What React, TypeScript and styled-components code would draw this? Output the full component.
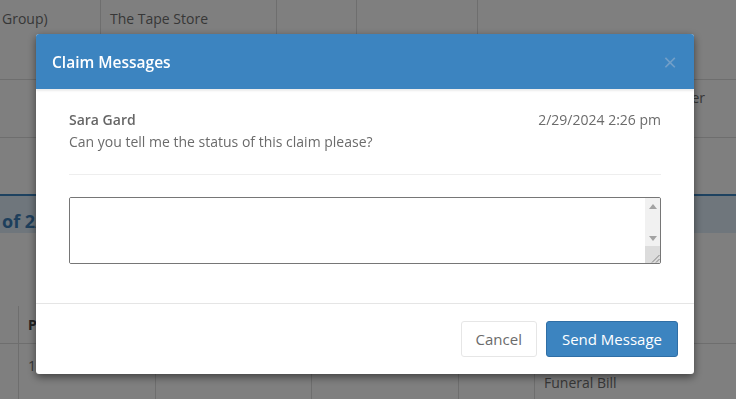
import React from "react"
import styled, { createGlobalStyle } from "styled-components"

const GlobalStyle = createGlobalStyle`
  html, body {
    margin: 0;
    padding: 0;
    background: #ffffff;
    font-family: "Open Sans", "Liberation Sans", sans-serif;
    overflow: hidden;
  }
`

const Page = styled.div`
  width: 736px;
  height: 399px;
  overflow: hidden;
  color: #6f6f6f;
  font-size: 14px;
`

const Grid = styled.div<{ $cols: string; $height: number }>`
  display: grid;
  grid-template-columns: ${p => p.$cols};
  height: ${p => p.$height}px;
  border-bottom: 1px solid #dddddd;
`

const Cell = styled.div<{ $bold?: boolean; $top?: number; $right?: number }>`
  border-left: 1px solid #dddddd;
  padding: ${p => p.$top ?? 9}px ${p => p.$right ?? 9}px 0 9px;
  line-height: 20px;
  font-weight: ${p => (p.$bold ? 700 : 400)};
  color: ${p => (p.$bold ? "#444" : "#6f6f6f")};
  text-align: ${p => (p.$right ? "right" : "left")};
  white-space: nowrap;

  &:first-child {
    border-left: none;
    padding-left: 2px;
  }
`

const Gap = styled.div<{ $height: number }>`
  height: ${p => p.$height}px;
`

const SectionBand = styled.div`
  height: 39px;
  box-sizing: border-box;
  border-top: 2px solid #3c84c0;
  background: #deecf8;
  color: #3d7fb8;
  font-weight: 700;
  font-size: 18px;
  line-height: 26px;
  padding: 12px 2px 0;
`

const Backdrop = styled.div`
  position: fixed;
  inset: 0;
  background: rgba(0, 0, 0, 0.5);
`

const Modal = styled.div`
  position: fixed;
  left: 36px;
  top: 34px;
  width: 658px;
  background: #ffffff;
  border-radius: 3px;
  box-shadow: 0 3px 9px rgba(0, 0, 0, 0.5);
  display: flex;
  flex-direction: column;
`

const Header = styled.div`
  height: 55px;
  background: #3c84c0;
  border-radius: 3px 3px 0 0;
  box-shadow: 0 2px 2px rgba(0, 0, 0, 0.08);
  display: flex;
  align-items: center;
  justify-content: space-between;
  padding: 0 16px;
  color: #ffffff;
  position: relative;
`

const Title = styled.div`
  font-size: 15.5px;
  font-weight: 600;
  line-height: 20px;
`

const Close = styled.div`
  font-size: 24px;
  font-weight: 400;
  color: #729fc8;
  line-height: 20px;
  margin-right: 1px;
`

const Body = styled.div`
  padding: 21px 33px 39px;
  border-bottom: 1px solid #e5e5e5;
`

const Message = styled.div`
  padding-bottom: 22px;
  border-bottom: 1px solid #eeeeee;
  line-height: 20px;
  color: #6b6b6b;
`

const MessageHead = styled.div`
  display: flex;
  justify-content: space-between;
  margin-bottom: 2px;
`

const Author = styled.span`
  font-weight: 600;
  color: #666;
`

const Stamp = styled.span`
  color: #6b6b6b;
`

const ReplyBox = styled.div`
  display: flex;
  height: 67px;
  box-sizing: border-box;
  margin-top: 22px;
  border: 1px solid #767676;
  border-radius: 2px;
  overflow: hidden;
`

const Reply = styled.textarea`
  flex: 1;
  border: none;
  resize: none;
  font-family: inherit;
  font-size: 14px;
  padding: 2px 4px;
  outline: none;
`

const ScrollColumn = styled.div`
  width: 15px;
  display: flex;
  flex-direction: column;
  background: #f1f1f1;
`

const Track = styled.div`
  flex: 1;
  display: flex;
  flex-direction: column;
  justify-content: space-between;
  align-items: center;
  padding: 6px 0 5px;
`

const Resizer = styled.div`
  height: 17px;
  background: #dcdcdc;
  display: flex;
  align-items: flex-end;
  justify-content: flex-end;
`

const Arrow = ({ down }: { down?: boolean }) => (
  <svg width="8" height="5" viewBox="0 0 8 5">
    <polygon points={down ? "0,0 8,0 4,5" : "4,0 8,5 0,5"} fill="#a3a3a3" />
  </svg>
)

const Grip = () => (
  <svg width="9" height="9" viewBox="0 0 9 9">
    <line x1="8.5" y1="1" x2="1" y2="8.5" stroke="#6a6a6a" strokeWidth="0.8" />
    <line x1="8.5" y1="5" x2="5" y2="8.5" stroke="#6a6a6a" strokeWidth="0.8" />
  </svg>
)

const Footer = styled.div`
  display: flex;
  justify-content: flex-end;
  gap: 9px;
  padding: 17px 16px 17px;
`

const Button = styled.button<{ $primary?: boolean }>`
  height: 36px;
  padding: 0 ${p => (p.$primary ? 15 : 14)}px;
  font-family: inherit;
  font-size: 15px;
  border-radius: 3px;
  border: 1px solid ${p => (p.$primary ? "#2f6ea5" : "#e6e6e6")};
  background: ${p => (p.$primary ? "#3c84c0" : "#ffffff")};
  color: ${p => (p.$primary ? "#ffffff" : "#6b6b6b")};
  cursor: pointer;
`

const TOP_COLS = "100px 176px 80px 121px 1fr"
const BOTTOM_COLS = "18px 137px 156px 147px 76px 1fr"

const App = () => (
  <Page>
    <GlobalStyle />
    <Grid $cols={TOP_COLS} $height={79}>
      <Cell>Group)</Cell>
      <Cell>The Tape Store</Cell>
      <Cell />
      <Cell />
      <Cell />
    </Grid>
    <Grid $cols={TOP_COLS} $height={57}>
      <Cell />
      <Cell />
      <Cell />
      <Cell />
      <Cell $top={8} $right={31}>
        Other
      </Cell>
    </Grid>
    <Gap $height={56} />
    <SectionBand>of 2/29/2024</SectionBand>
    <Gap $height={73} />
    <Grid $cols={BOTTOM_COLS} $height={37}>
      <Cell />
      <Cell $bold>Payee</Cell>
      <Cell />
      <Cell />
      <Cell />
      <Cell />
    </Grid>
    <Grid $cols={BOTTOM_COLS} $height={60}>
      <Cell />
      <Cell $top={12}>1</Cell>
      <Cell />
      <Cell />
      <Cell />
      <Cell $top={29}>Funeral Bill</Cell>
    </Grid>

    <Backdrop />
    <Modal>
      <Header>
        <Title>Claim Messages</Title>
        <Close>×</Close>
      </Header>
      <Body>
        <Message>
          <MessageHead>
            <Author>Sara Gard</Author>
            <Stamp>2/29/2024 2:26 pm</Stamp>
          </MessageHead>
          Can you tell me the status of this claim please?
        </Message>
        <ReplyBox>
          <Reply />
          <ScrollColumn>
            <Track>
              <Arrow />
              <Arrow down />
            </Track>
            <Resizer>
              <Grip />
            </Resizer>
          </ScrollColumn>
        </ReplyBox>
      </Body>
      <Footer>
        <Button>Cancel</Button>
        <Button $primary>Send Message</Button>
      </Footer>
    </Modal>
  </Page>
)

export default App
